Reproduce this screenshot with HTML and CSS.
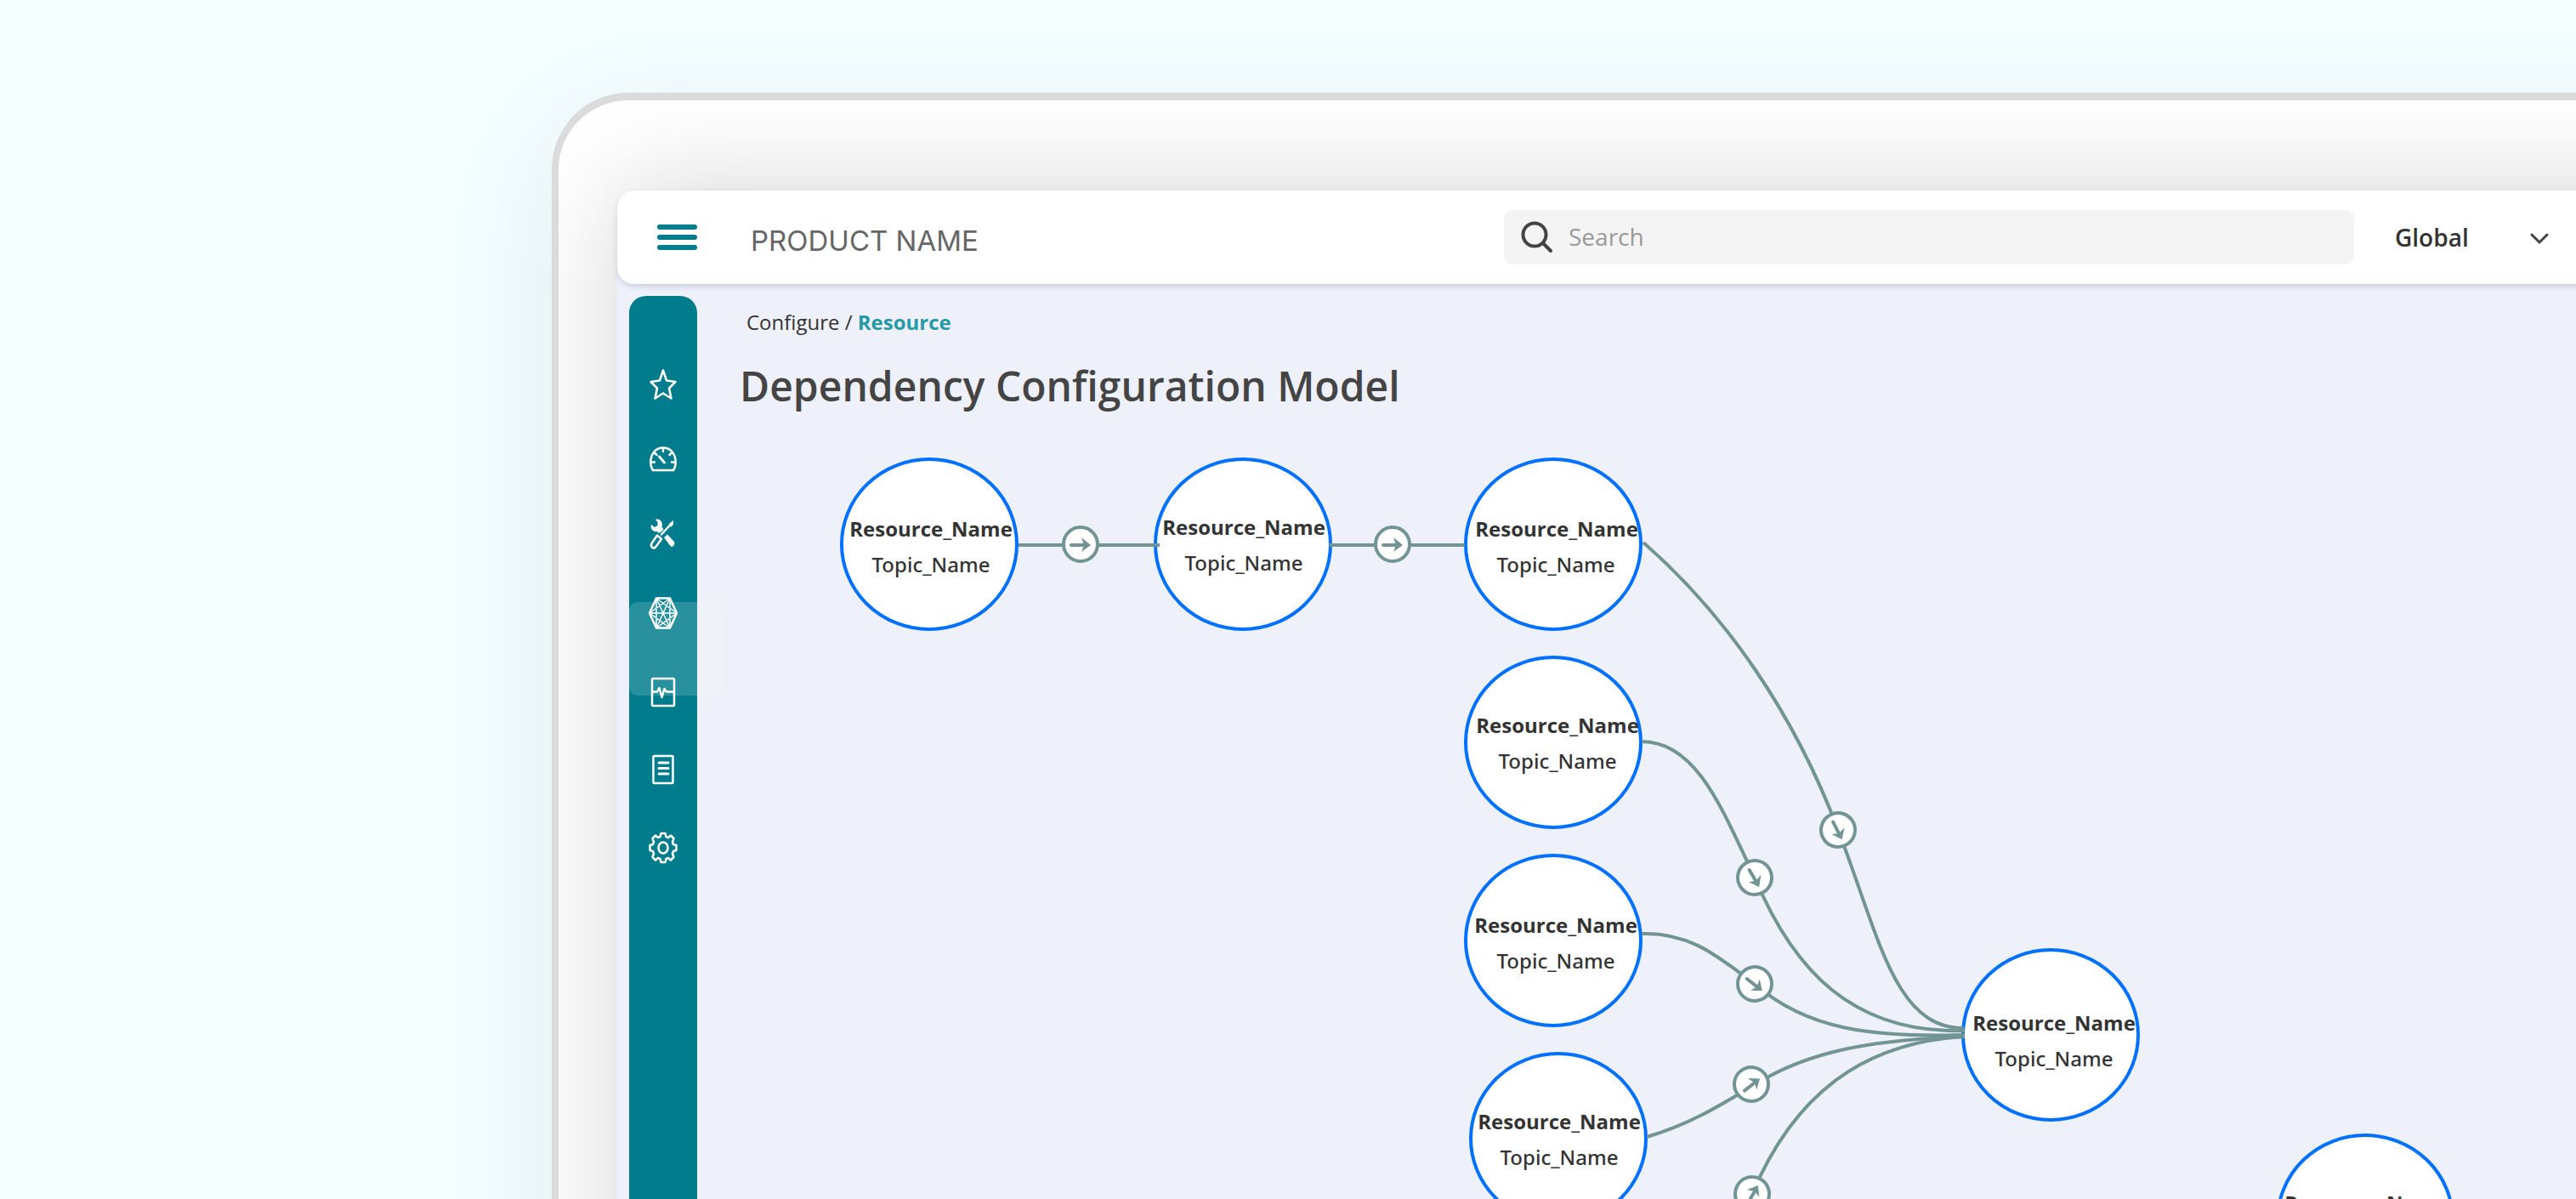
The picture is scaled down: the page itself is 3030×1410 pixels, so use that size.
FILE: index.html
```html
<!DOCTYPE html>
<html lang="en">
<head>
<meta charset="utf-8">
<title>Dependency Configuration Model</title>
<link rel="stylesheet" href="styles.css">
</head>
<body>
<div class="device">
  <div class="screen">
    <header class="topbar">
      <button class="menu-button" type="button" aria-label="Menu"><span></span><span></span><span></span></button>
      <div class="product">PRODUCT NAME</div>
      <label class="search">
        <svg class="search-icon" width="38" height="38" viewBox="0 0 38 38" aria-hidden="true"><circle cx="16" cy="16" r="13.5"/><path d="M26 26 35 35"/></svg>
        <input type="search" placeholder="Search" aria-label="Search">
      </label>
      <div class="scope">
        <select aria-label="Scope"><option>Global</option></select>
        <svg class="chevron" width="22" height="14" viewBox="0 0 22 14" aria-hidden="true"><path d="M2 2 11 11 20 2"/></svg>
      </div>
    </header>

    <div class="body">
      <nav class="sidebar" aria-label="Main">
        <div class="nav-group">
          <a class="nav-link" href="#" aria-label="Favorites">
            <svg viewBox="0 0 40 40"><path d="M20 3.500 24 15.500 34.500 17 27 24.500 29.500 36.500 20 30.500 10.500 36.500 13 24.500 5.500 17 16 15.500Z"/></svg>
          </a>
          <a class="nav-link" href="#" aria-label="Dashboard">
            <svg viewBox="0 0 40 40"><path d="M8 33C3.500 26 5 16 10 10.500 15.500 5 24.500 5 30 10.500 35 16 36.500 26 32 33ZM20 7v4M10.500 13l2 2M29.500 13l-2 2M6 23.500h4M34 23.500h-4"/><path class="thick" d="M15.500 17 21.500 24"/></svg>
          </a>
          <a class="nav-link" href="#" aria-label="Tools">
            <svg viewBox="0 0 40 40"><path class="fill" d="M11 3C16 1 20 6 18.500 11L20.500 15 15.500 19 12.500 17C8 18 4.500 13 6 9L10 12 13.500 10 13.500 6ZM21 24 25 20.500 33 29C34.500 33 31 36.500 28.500 34Z"/><path d="M18 20.500 29 8.500"/><path class="fill" d="M27 8 32 4 32 8.500 29 12Z"/><path d="M13 21.500 18 26 11 35.500C8.500 38 4.500 34.500 6.500 31Z"/></svg>
          </a>
        </div>
        <div class="nav-group nav-group--roomy">
          <a class="nav-link" href="#" aria-label="Dependencies" aria-current="page">
            <svg viewBox="0 0 40 40"><path d="M12 2.500H28L36 20 28 37.500H12L4 20Z"/><path class="thin" d="M12 2.500 28 37.500M28 2.500 12 37.500M4 20H36M12 2.500V37.500M28 2.500V37.500M4 20 28 2.500M4 20 28 37.500M36 20 12 2.500M36 20 12 37.500"/></svg>
          </a>
          <a class="nav-link" href="#" aria-label="Monitoring">
            <svg viewBox="0 0 40 40"><rect x="7" y="5" width="26" height="32" rx="1"/><path d="M7 20.500H13L15.500 16 18.500 27 21.500 17 24 20.500H33"/></svg>
          </a>
          <a class="nav-link" href="#" aria-label="Reports">
            <svg viewBox="0 0 40 40"><rect x="8.500" y="4" width="23" height="32" rx="1"/><path class="thick" d="M15 12H26M15 18.500H26M15 25H26"/></svg>
          </a>
          <a class="nav-link" href="#" aria-label="Settings">
            <svg viewBox="0 0 40 40"><path d="M17.500 3h5l1 4 2.500 1 3-2.500 3.500 3.500-1.500 4 1 3 3.500 1v6l-3.500 1-1 3 1.500 4-3.500 3.500-3-2.500-2.500 1-1 4h-5l-1-4-2.500-1-3 2.500-3.500-3.500 1.500-4-1-3-3.500-1v-6l3.500-1 1-3-1.500-4 3.500-3.500 3 2.500 2.500-1Z"/><ellipse cx="20" cy="20" rx="5.500" ry="6.500"/></svg>
          </a>
        </div>
        <span class="nav-highlight"></span>
      </nav>

      <main class="content">
        <nav class="breadcrumb" aria-label="Breadcrumb"><a href="#">Configure</a> / <a class="current" href="#">Resource</a></nav>
        <h1>Dependency Configuration Model</h1>

        <svg class="diagram" role="img" aria-label="Dependency graph">
          <defs>
            <g id="badge">
              <circle class="badge-ring" r="20"/>
              <path class="badge-shaft" d="M-11 1H5"/>
              <path class="badge-head" d="M1-8 12 1 1 9 4 1Z"/>
            </g>
          </defs>

          <g class="nodes">
            <ellipse cx="233" cy="120" rx="103" ry="100"/>
            <ellipse cx="602" cy="120" rx="103" ry="100"/>
            <ellipse cx="967" cy="120" rx="103" ry="100"/>
            <ellipse cx="967" cy="353" rx="103" ry="100"/>
            <ellipse cx="967" cy="586" rx="103" ry="100"/>
            <ellipse cx="973" cy="819" rx="103" ry="100"/>
            <ellipse cx="1552" cy="697" rx="103" ry="100"/>
            <ellipse cx="1922" cy="915" rx="103" ry="100"/>
          </g>

          <g class="edges">
            <path d="M338 121H504"/>
            <path d="M704 121H863"/>
            <path d="M1073 118C1169 202 1250 318 1302 456C1350 580 1368 690 1450 689"/>
            <path d="M1071 352C1135 352 1165 430 1204 512C1250 622 1320 696 1451 692"/>
            <path d="M1071 578C1132 576 1166 610 1204 637C1266 692 1345 700 1451 697"/>
            <path d="M1077 817C1125 803 1160 782 1200 758C1265 716 1340 703 1451 699"/>
            <path d="M1201 884C1250 768 1330 706 1451 699"/>
          </g>

          <g class="names">
            <text x="235" y="111">Resource_Name</text>
            <text x="603" y="109">Resource_Name</text>
            <text x="971" y="111">Resource_Name</text>
            <text x="972" y="342">Resource_Name</text>
            <text x="970" y="577">Resource_Name</text>
            <text x="974" y="808">Resource_Name</text>
            <text x="1556" y="692">Resource_Name</text>
            <text x="1923" y="904">Resource_Name</text>
          </g>
          <g class="topics">
            <text x="235" y="153">Topic_Name</text>
            <text x="603" y="151">Topic_Name</text>
            <text x="970" y="153">Topic_Name</text>
            <text x="972" y="384">Topic_Name</text>
            <text x="970" y="619">Topic_Name</text>
            <text x="974" y="850">Topic_Name</text>
            <text x="1556" y="734">Topic_Name</text>
          </g>

          <use href="#badge" transform="translate(411 120)"/>
          <use href="#badge" transform="translate(778 120)"/>
          <use href="#badge" transform="translate(1302 456) rotate(63)"/>
          <use href="#badge" transform="translate(1204 512) rotate(60)"/>
          <use href="#badge" transform="translate(1204 637) rotate(38)"/>
          <use href="#badge" transform="translate(1200 755) rotate(-38)"/>
          <use href="#badge" transform="translate(1201 884) rotate(-60)"/>
        </svg>
      </main>
    </div>
  </div>
</div>
</body>
</html>
```
FILE: styles.css
```css
* { box-sizing: border-box; }

body {
  margin: 0;
  height: 100vh;
  overflow: hidden;
  padding: 109px 0 0 649px;
  background: #f4fdff;
  color: #333;
  font-family: "Open Sans", "Noto Sans", sans-serif;
  font-size: 24px;
}

a { color: inherit; text-decoration: none; }

/* Tablet body: rounded on the left, runs off the window on the right and bottom */
.device {
  height: calc(100% + 160px);
  margin-right: -160px;
  padding: 106px 0 0 69px;
  border: solid #dbdbdb;
  border-width: 9px 0 0 8px;
  border-radius: 90px 0 0 0;
  background: #fff;
  box-shadow: 0 40px 140px rgba(0, 30, 40, .08);
  overflow: clip;
}

.screen {
  display: flex;
  flex-direction: column;
  height: 100%;
  border-radius: 20px 0 0 0;
  background: #eef0fa;
  box-shadow: 0 0 130px rgba(0, 0, 0, .17);
}

.topbar {
  flex: none;
  display: flex;
  align-items: center;
  height: 110px;
  padding: 0 192px 0 47px;
  border-radius: 20px 0 0 20px;
  background: #fff;
  box-shadow: 0 3px 8px -2px rgba(30, 50, 80, .25);
}

.menu-button {
  display: flex;
  flex-direction: column;
  gap: 6px;
  width: 47px;
  padding: 0;
  border: 0;
  background: none;
}
.menu-button span { height: 6px; border-radius: 3px; background: #007c8c; }

.product {
  flex: 1;
  padding: 8px 0 0 63px;
  color: #666;
  font-family: Inter, "Liberation Sans", sans-serif;
  font-size: 33px;
  font-weight: 400;
}

.search {
  display: flex;
  align-items: center;
  gap: 18px;
  width: 1000px;
  height: 64px;
  padding: 0 20px;
  border-radius: 10px;
  background: #f4f4f4;
}
.search-icon { fill: none; stroke: #444; stroke-width: 4; stroke-linecap: round; }
.search input {
  flex: 1;
  min-width: 0;
  padding: 0 0 2px;
  border: 0;
  outline: 0;
  background: none;
  color: #333;
  font: 28px "Open Sans", sans-serif;
}
.search input::placeholder { color: #999; opacity: 1; }

.scope { display: flex; align-items: center; padding-left: 48px; }
.scope select {
  width: 159px;
  padding: 0;
  border: 0;
  appearance: none;
  background: none;
  color: #333;
  font: 600 28px "Open Sans", sans-serif;
}
.chevron { margin-top: 4px; fill: none; stroke: #444; stroke-width: 3; stroke-linecap: round; }

.body { flex: 1; display: flex; min-height: 0; padding: 14px 0 0 14px; }

.sidebar {
  position: relative;
  flex: none;
  display: flex;
  flex-direction: column;
  gap: 3px;
  width: 80px;
  padding-top: 60px;
  border-radius: 20px 20px 0 0;
  background: #007c8c;
}
.nav-link { display: flex; align-items: center; justify-content: center; height: 88px; }
.nav-group--roomy .nav-link { height: 92px; }
.nav-link svg {
  width: 40px;
  height: 40px;
  fill: none;
  stroke: #fff;
  stroke-width: 2.5;
  stroke-linejoin: round;
  stroke-linecap: round;
}
.nav-link .thick { stroke-width: 3; }
.nav-link .thin { stroke-width: 1.5; }
.nav-link .fill { fill: #fff; stroke: none; }
.nav-highlight {
  position: absolute;
  top: 360px;
  left: 0;
  width: 110px;
  height: 110px;
  border-radius: 10px;
  background: rgba(255, 255, 255, .16);
}

.content { flex: 1; display: flex; flex-direction: column; min-width: 0; padding-left: 40px; }

.breadcrumb { padding-left: 18px; line-height: 62px; }
.breadcrumb .current { color: #2699a6; font-weight: 700; }

h1 {
  margin: 0;
  padding-left: 10px;
  color: #444;
  font-size: 48px;
  font-weight: 600;
  line-height: 88px;
}

.diagram { flex: 1; display: block; width: 100%; min-height: 0; margin-top: 22px; }
.nodes { fill: #fff; stroke: #0070ff; stroke-width: 4; }
.edges { fill: none; stroke: #729494; stroke-width: 4; }
.names, .topics { fill: #333; text-anchor: middle; }
.names { font-weight: 700; }
.topics { font-family: "Noto Sans", "Open Sans", sans-serif; font-weight: 500; }
.badge-ring { fill: #fff; stroke: #729494; stroke-width: 4; }
.badge-shaft { stroke: #729494; stroke-width: 4; stroke-linecap: round; }
.badge-head { fill: #729494; }
```
